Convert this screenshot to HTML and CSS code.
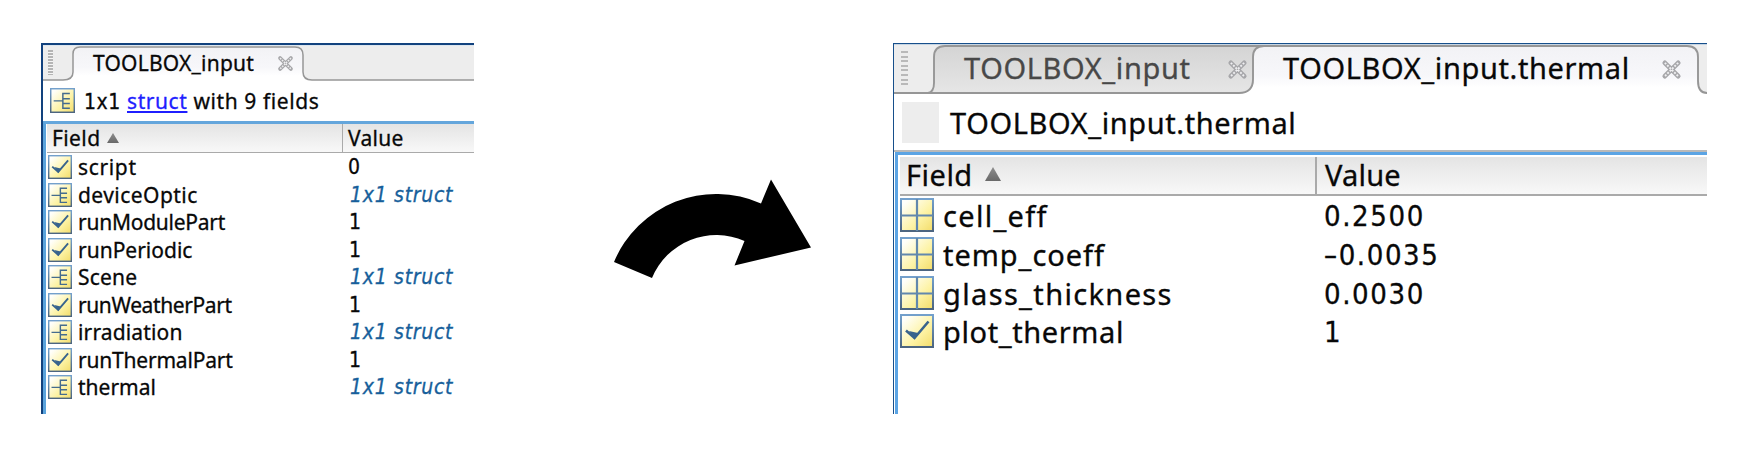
FILE: index.html
```html
<!DOCTYPE html>
<html lang="en">
<head>
<meta charset="utf-8">
<title>TOOLBOX_input</title>
<link rel="stylesheet" href="styles.css">
</head>
<body>
<svg class="defs" width="0" height="0" aria-hidden="true">
  <defs>
    <linearGradient id="paper" x1="0" y1="0" x2="1" y2="1"><stop offset=".12" stop-color="#fffffb"/><stop offset=".6" stop-color="#fdf3a5"/><stop offset="1" stop-color="#f3dc69"/></linearGradient>
    <linearGradient id="edge" x1="0" y1="0" x2="0" y2="1"><stop offset="0" stop-color="#73a0cc"/><stop offset="1" stop-color="#4c6580"/></linearGradient>
    <linearGradient id="active" x1="0" y1="0" x2="0" y2="1"><stop offset="0" stop-color="#f2f2f5"/><stop offset=".6" stop-color="#f7f7fa"/><stop offset=".85" stop-color="#fff"/></linearGradient>
    <linearGradient id="idle" x1="0" y1="0" x2="0" y2="1"><stop offset="0" stop-color="#d4d4d4"/><stop offset="1" stop-color="#e6e6e6"/></linearGradient>
    <symbol id="base" viewBox="0 0 34 34"><rect x="1" y="1" width="32" height="32" fill="url(#paper)" stroke="url(#edge)" stroke-width="2"/></symbol>
    <symbol id="check" viewBox="0 0 34 34"><use href="#base"/><path d="M6 16.500 14.500 24 28.500 7.500" fill="none" stroke="#38638d" stroke-width="2.600"/><path d="M9 17 14.500 25.500 18 19" fill="#38638d"/></symbol>
    <symbol id="struct" viewBox="0 0 34 34"><use href="#base"/><path d="M5 17.500H17M27 7.500H17.500V27.500H27M17.500 14.500H27M17.500 21H27" fill="none" stroke="#456c8e" stroke-width="2"/></symbol>
    <symbol id="matrix" viewBox="0 0 34 34"><use href="#base"/><path d="M17 1V33M1 17.500H33" stroke="#6288ad" stroke-width="2.200"/></symbol>
    <symbol id="close" viewBox="0 0 22 22"><path d="M4 4 18 18M18 4 4 18" stroke="#a7a7aa" stroke-width="5" stroke-linecap="round"/><path d="M4 4 18 18M18 4 4 18" stroke="#efeff1" stroke-width="2" stroke-dasharray="2 1.500"/></symbol>
  </defs>
</svg>
<main class="stage">
  <section class="panel small">
    <div class="tabs">
      <svg class="tabshape" width="431" height="35" viewBox="0 0 431 35"><path d="M0 34H20Q30 34 30 26V8Q30 1 37 1H252Q260 1 260 9V26Q260 34 269 34H431V35H0Z" fill="url(#active)"/><path d="M0 34H20Q30 34 30 26V8Q30 1 37 1H252Q260 1 260 9V26Q260 34 269 34H431" fill="none" stroke="#969696" stroke-width="1.500"/></svg>
      <span class="grip"></span><span class="tab">TOOLBOX_input</span><svg class="x"><use href="#close"/></svg>
    </div>
    <div class="info"><svg class="icon"><use href="#struct"/></svg><span class="summary"><span class="num">1x1</span> <a>struct</a> with 9 fields</span></div>
    <div class="table">
      <div class="head"><span class="hname">Field</span><i class="sort"></i><span class="hvalue">Value</span></div>
      <div class="row"><svg class="icon"><use href="#check"/></svg><span class="name script">script</span><span class="value">0</span></div>
      <div class="row"><svg class="icon"><use href="#struct"/></svg><span class="name device">deviceOptic</span><span class="value ref">1x1 struct</span></div>
      <div class="row"><svg class="icon"><use href="#check"/></svg><span class="name module">runModulePart</span><span class="value one">1</span></div>
      <div class="row"><svg class="icon"><use href="#check"/></svg><span class="name">runPeriodic</span><span class="value one">1</span></div>
      <div class="row"><svg class="icon"><use href="#struct"/></svg><span class="name scene">Scene</span><span class="value ref">1x1 struct</span></div>
      <div class="row"><svg class="icon"><use href="#check"/></svg><span class="name weather">runWeatherPart</span><span class="value one">1</span></div>
      <div class="row"><svg class="icon"><use href="#struct"/></svg><span class="name irradiation">irradiation</span><span class="value ref">1x1 struct</span></div>
      <div class="row"><svg class="icon"><use href="#check"/></svg><span class="name runthermal">runThermalPart</span><span class="value one">1</span></div>
      <div class="row"><svg class="icon"><use href="#struct"/></svg><span class="name">thermal</span><span class="value ref">1x1 struct</span></div>
    </div>
  </section>
  <svg class="arrow" width="198" height="100" viewBox="614 179 198 100"><path d="M614 262A110.500 110.500 0 0 1 761 203.500L771 179.500 811 247.500 734.500 265.500 744.500 241A69.500 69.500 0 0 0 652 278Z"/></svg>
  <section class="panel large">
    <div class="tabs">
      <svg class="tabshape" width="813" height="50" viewBox="0 0 813 50"><path d="M34 48Q40 48 40 38V12Q40 1 51 1H375V48Z" fill="url(#idle)"/><path d="M345 48Q360 48 360 34V12Q360 1 371 1H793Q804 1 804 12V36Q804 48 813 48V50H345Z" fill="url(#active)"/><path d="M0 48H813V50H0Z" fill="#fff"/><path d="M0 48H34Q40 47 40 38V12Q40 1 51 1H380M30 48H345Q359 48 359 34V12Q359 1 370 1H793Q804 1 804 12V36Q804 48 813 48" fill="none" stroke="#969696" stroke-width="1.900"/></svg>
      <span class="grip"></span><span class="tab idle">TOOLBOX_input</span><svg class="x"><use href="#close"/></svg><span class="tab current">TOOLBOX_input.thermal</span><svg class="x"><use href="#close"/></svg>
    </div>
    <div class="info"><i class="blank"></i><span class="summary">TOOLBOX_input.thermal</span></div>
    <div class="table">
      <div class="head"><span class="hname">Field</span><i class="sort"></i><span class="hvalue">Value</span></div>
      <div class="row"><svg class="icon"><use href="#matrix"/></svg><span class="name cell">cell_eff</span><span class="value">0.2500</span></div>
      <div class="row"><svg class="icon"><use href="#matrix"/></svg><span class="name temp">temp_coeff</span><span class="value">–0.0035</span></div>
      <div class="row"><svg class="icon"><use href="#matrix"/></svg><span class="name glass">glass_thickness</span><span class="value">0.0030</span></div>
      <div class="row"><svg class="icon"><use href="#check"/></svg><span class="name">plot_thermal</span><span class="value">1</span></div>
    </div>
  </section>
</main>
</body>
</html>
```
FILE: styles.css
```css
* { box-sizing: border-box; }
body { margin: 0; background: #fff; color: #080808; font-family: "Noto Sans", "Open Sans", sans-serif; font-variant-ligatures: none; overflow: hidden; }
.defs { position: absolute; }
.stage { display: flex; align-items: flex-start; width: 1754px; height: 460px; padding: 43px 0 0 41px; }
.panel { flex: none; height: 371px; overflow: hidden; background: #fff; white-space: nowrap; -webkit-text-stroke: .3px currentColor; }
.arrow { flex: none; margin: 136px 81px 0 140px; }
svg { display: block; flex: none; }

.tabs { position: relative; display: flex; background: #ededed; }
.tabs > * { position: relative; flex: none; }
.tabs > .tabshape { position: absolute; left: 0; top: 0; }
.info, .row, .head { display: flex; }
.icon, .name, .summary, .hname, .sort, .blank { flex: none; }
.summary a { color: #1f1fff; text-decoration: underline; text-decoration-thickness: 2px; text-underline-offset: 2px; }
.num, .value { font-family: "DejaVu Sans Condensed", "DejaVu Sans", sans-serif; font-stretch: condensed; }
.head { background: linear-gradient(#e4e4e4, #f8f8f8); border-bottom: 1px solid #aaa; }
.sort { clip-path: polygon(50% 0, 100% 100%, 0 100%); background: linear-gradient(#8d8d8d, #696969); }

.small { width: 433px; border: solid #12427e; border-width: 2px 0 0 2px; font-size: 21px; }
.small .tabs { height: 36px; background: linear-gradient(#ededed 34px, #fff 34px); border-top: 1px solid #dce6ef; }
.small .grip { width: 5px; height: 25px; margin: 4px 0 0 5px; background: repeating-linear-gradient(#b5b5b5 0 1.500px, #f5f5f5 1.500px 3px); }
.small .tab { width: 184px; margin-left: 40px; line-height: 34px; letter-spacing: .22px; }
.small .x { width: 17px; height: 17px; margin-top: 9px; }
.small .info { height: 40px; padding: 7px 0 0 7px; }
.small .info .icon { width: 25px; height: 25px; }
.small .summary { margin-left: 9px; line-height: 27px; letter-spacing: .58px; }
.small .table { height: 300px; border: solid #5aa3dc; border-width: 3px 0 0 3px; border-top-color: #64a6dc; }
.small .head { height: 29px; margin-left: 1px; }
.small .hname { width: 54px; padding-left: 5px; line-height: 28px; letter-spacing: .4px; }
.small .sort { width: 12px; height: 10px; margin: 9px 0 0 6px; }
.small .hvalue { margin-left: 223px; padding-left: 5px; border-left: 1px solid #aaa; line-height: 28px; letter-spacing: .3px; }
.small .row { height: 27.500px; padding: 1px 0 0 2px; }
.small .row .icon { width: 24px; height: 24px; margin-top: 1px; }
.small .name { width: 270px; padding-left: 6px; line-height: 26px; }
.small .value { padding-left: 6px; line-height: 26px; }
.small .one { padding-left: 7px; }
.small .ref { padding-left: 8px; color: #175f9b; font-style: italic; letter-spacing: .72px; }
.small .script { letter-spacing: .65px; }
.small .device { letter-spacing: .45px; }
.small .module { letter-spacing: -.25px; }
.small .scene { letter-spacing: .2px; }
.small .weather { letter-spacing: -.4px; }
.small .irradiation { letter-spacing: .15px; }
.small .runthermal { letter-spacing: -.2px; }

.large { width: 814px; border: solid #174f8b; border-width: 1px 0 0 1px; font-size: 29px; }
.large .tabs { height: 50px; border-top: 1px solid #c6d5e3; }
.large .grip { width: 7px; height: 35px; margin: 6px 0 0 7px; background: repeating-linear-gradient(#b9b9b9 0 2px, #ededed 2px 4.600px); }
.large .tab { line-height: 46px; letter-spacing: .62px; }
.large .idle { width: 263px; margin-left: 56px; color: #484848; }
.large .x { width: 21px; height: 21px; margin-top: 14px; }
.large .current { width: 378px; margin-left: 35px; }
.large .info { height: 58px; padding: 8px 0 0 8px; border-bottom: 2px solid #b9b9b9; }
.large .blank { width: 37px; height: 41px; background: #ededed; }
.large .summary { margin-left: 11px; line-height: 41px; letter-spacing: .6px; }
.large .table { height: 270px; margin-left: 1px; border: solid #5ba4e4; border-width: 3px 0 0 3px; }
.large .head { height: 41px; margin: 0 0 0 2px; border-top: 2px solid #fff; border-bottom: 2px solid #aaa; }
.large .hname { width: 76px; padding-left: 6px; line-height: 36px; letter-spacing: .5px; }
.large .sort { width: 16px; height: 14px; margin: 10px 0 0 9px; }
.large .hvalue { margin-left: 314px; padding-left: 8px; border-left: 2px solid #aaa; line-height: 36px; letter-spacing: .2px; }
.large .row { height: 38.800px; padding: 2px 0 0 2px; }
.large .row .icon { width: 34px; height: 34px; }
.large .name { width: 382px; padding-left: 9px; line-height: 36px; letter-spacing: .6px; }
.large .cell { letter-spacing: 1.3px; }
.large .temp { letter-spacing: .95px; }
.large .glass { letter-spacing: 1.35px; }
.large .value { padding-left: 8px; line-height: 36px; letter-spacing: 1.6px; }
```
